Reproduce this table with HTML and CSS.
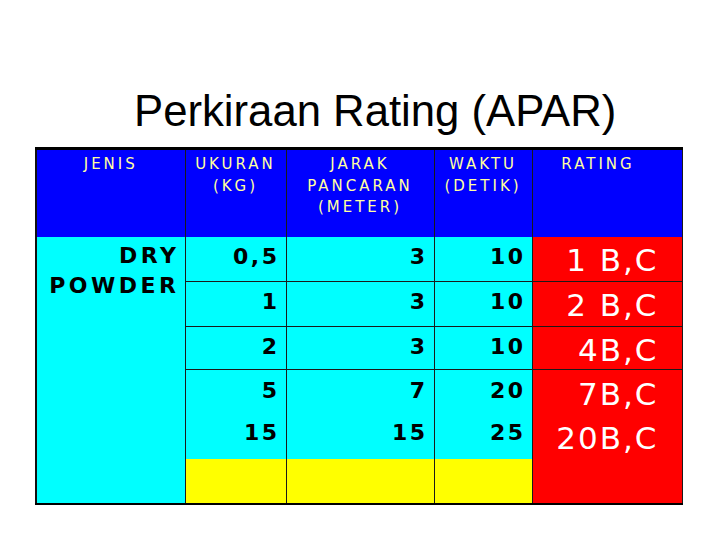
FILE: index.html
```html
<!DOCTYPE html>
<html lang="id">
    <head>
        <meta charset="UTF-8" />
        <meta name="viewport" content="width=device-width, initial-scale=1.0" />
        <title>Perkiraan Rating (APAR)</title>
        <link rel="stylesheet" href="styles.css">
    </head>
    <body>
        <div class="slide">
            <h1 class="slide-title">Perkiraan Rating (APAR)</h1>
            <table class="rating-table">
                <colgroup>
                    <col class="col-jenis" />
                    <col class="col-ukuran" />
                    <col class="col-jarak" />
                    <col class="col-waktu" />
                    <col class="col-rating" />
                </colgroup>
                <thead>
                    <tr class="head-row">
                        <th>JENIS</th>
                        <th>UKURAN<br />(KG)</th>
                        <th>JARAK<br />PANCARAN<br />(METER)</th>
                        <th>WAKTU<br />(DETIK)</th>
                        <th class="head-rating">RATING</th>
                    </tr>
                </thead>
                <tbody>
                    <tr class="row-a">
                        <td class="jenis" rowspan="5">DRY<br />POWDER</td>
                        <td class="num">0,5</td>
                        <td class="num">3</td>
                        <td class="num">10</td>
                        <td class="rating">1 B,C</td>
                    </tr>
                    <tr class="row-b">
                        <td class="num">1</td>
                        <td class="num">3</td>
                        <td class="num">10</td>
                        <td class="rating">2 B,C</td>
                    </tr>
                    <tr class="row-c">
                        <td class="num">2</td>
                        <td class="num">3</td>
                        <td class="num">10</td>
                        <td class="rating">4B,C</td>
                    </tr>
                    <tr class="row-d">
                        <td class="num multi">5<br />15</td>
                        <td class="num multi">7<br />15</td>
                        <td class="num multi">20<br />25</td>
                        <td class="rating multi" rowspan="2">7B,C<br />20B,C</td>
                    </tr>
                    <tr class="row-e">
                        <td class="empty"></td>
                        <td class="empty"></td>
                        <td class="empty"></td>
                    </tr>
                </tbody>
            </table>
        </div>
    </body>
</html>
```

FILE: styles.css
```css
body {
    margin: 0;
    padding: 0;
    background-color: #ffffff;
}
.slide {
    width: 720px;
    height: 540px;
    padding: 86px 0 0 35px;
    box-sizing: border-box;
}
.slide-title {
    margin: 0 0 11px 99px;
    font-family: "Liberation Sans", Arial, sans-serif;
    font-size: 43.7px;
    font-weight: normal;
    line-height: 50px;
    color: #000000;
}
.rating-table {
    width: 646px;
    border-collapse: collapse;
    table-layout: fixed;
    font-family: "DejaVu Sans", Verdana, sans-serif;
    border-top: 3px solid #000000;
    border-left: 2px solid #111111;
    border-bottom: 2px solid #000000;
    border-right: 1px solid #8a8a8a;
}
.col-jenis {
    width: 149px;
}
.col-ukuran {
    width: 101px;
}
.col-jarak {
    width: 148px;
}
.col-waktu {
    width: 98px;
}
.col-rating {
    width: 150px;
}
.rating-table th,
.rating-table td {
    padding: 0;
    vertical-align: top;
    border-left: 1px solid #1a1a1a;
    border-right: 1px solid #1a1a1a;
}
.head-row {
    height: 88px;
}
.head-row th {
    padding-top: 4px;
    background-color: #0000ff;
    color: #ffffa0;
    font-size: 15px;
    font-weight: normal;
    line-height: 21.5px;
    letter-spacing: 3px;
    text-align: center;
}
.head-row .head-rating {
    padding-right: 18px;
}
.row-a,
.row-b {
    height: 45px;
}
.row-c {
    height: 43px;
}
.row-d {
    height: 89px;
}
.row-e {
    height: 45px;
}
.row-a td,
.row-b td,
.row-c td {
    border-bottom: 1px solid #1a1a1a;
}
.rating-table .jenis {
    padding: 4px 5px 0 0;
    background-color: #00ffff;
    color: #000000;
    font-size: 22px;
    font-weight: bold;
    line-height: 30px;
    letter-spacing: 3.5px;
    text-align: right;
}
.rating-table .num {
    padding: 2px 6px 0 0;
    background-color: #00ffff;
    color: #000000;
    font-size: 22px;
    font-weight: bold;
    line-height: 36px;
    letter-spacing: 2.5px;
    text-align: right;
}
.rating-table .num.multi {
    padding-top: 0;
    line-height: 42px;
}
.rating-table .empty {
    background-color: #ffff00;
}
.rating-table .rating {
    padding: 4px 23px 0 0;
    background-color: #ff0000;
    color: #ffffff;
    font-size: 31px;
    line-height: 38px;
    letter-spacing: 2px;
    text-align: right;
}
.rating-table .rating.multi {
    padding-top: 2px;
    line-height: 44px;
}
```
